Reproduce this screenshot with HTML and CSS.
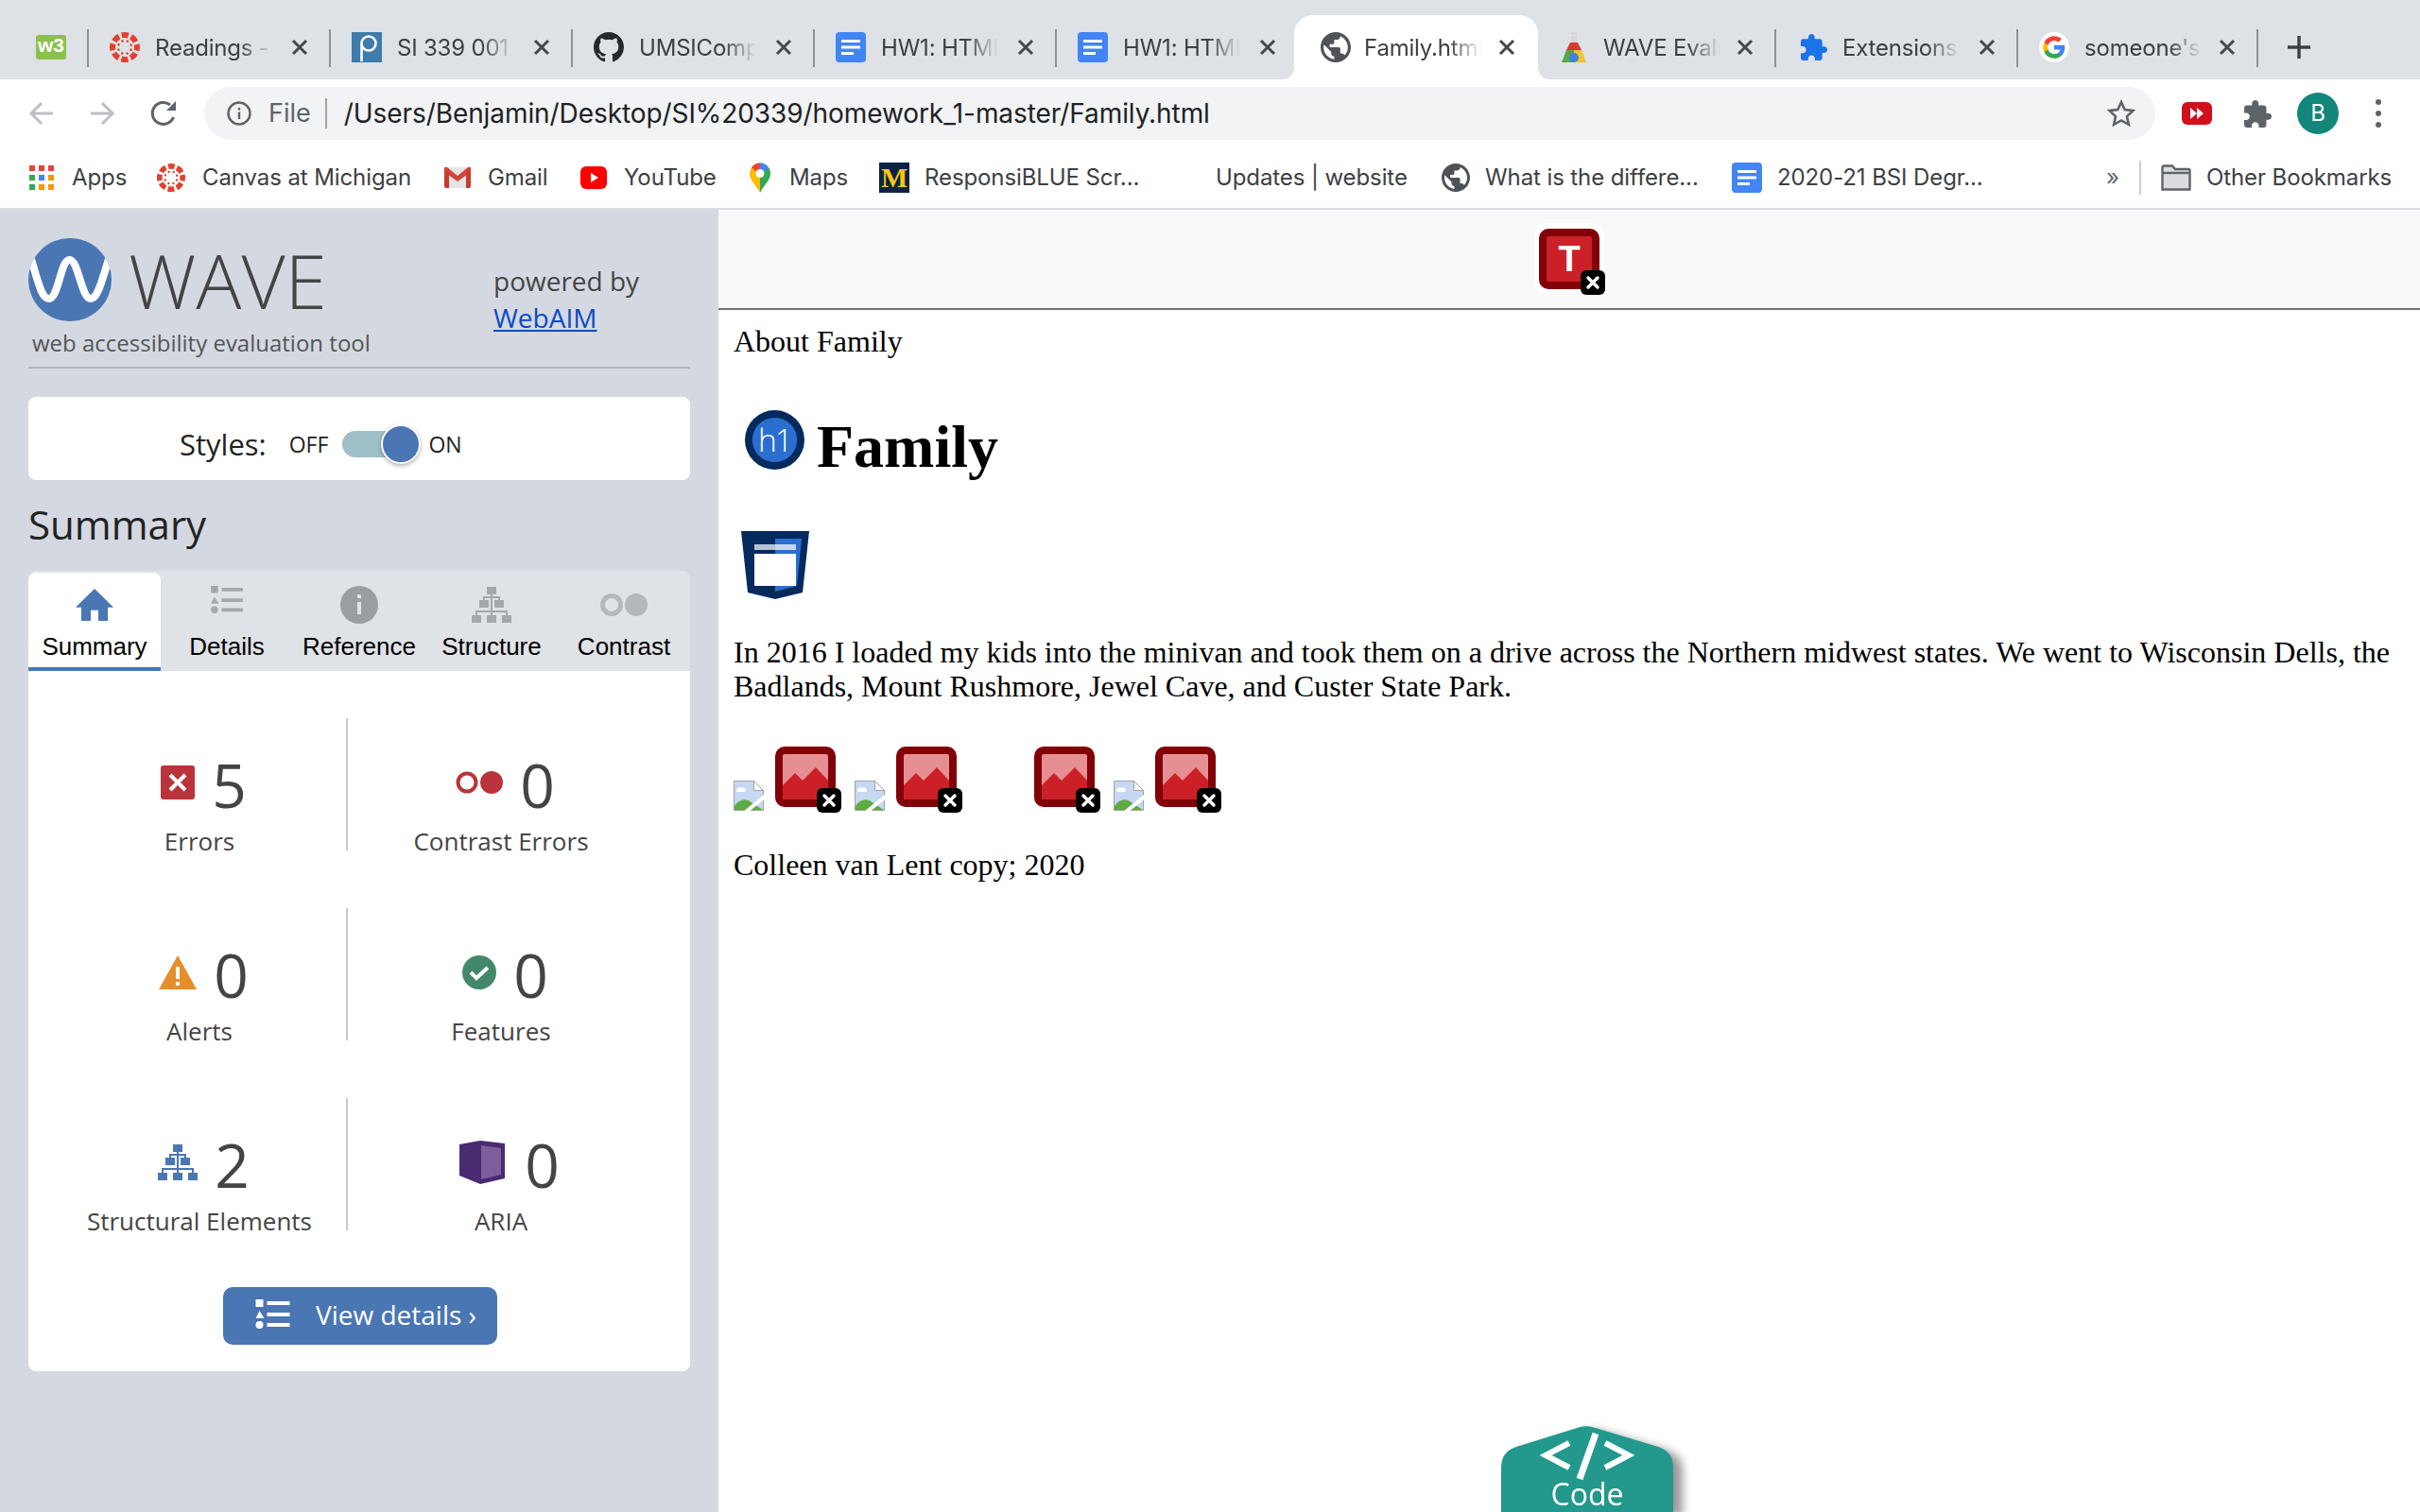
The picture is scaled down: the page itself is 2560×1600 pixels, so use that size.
FILE: index.html
```html
<!DOCTYPE html>
<html lang="en">
<head>
  <meta charset="UTF-8">
  <title>Family.html</title>
  <link rel="stylesheet" href="styles.css">
</head>
<body>
  <svg class="defs" width="0" height="0">
    <symbol id="canvas" viewBox="0 0 32 32">
      <circle cx="16" cy="16" r="13" fill="none" stroke="#e2402f" stroke-width="6" stroke-dasharray="7.200 3" stroke-dashoffset="3.600"/>
      <circle cx="16" cy="16" r="7" fill="none" stroke="#e2402f" stroke-width="2.600" stroke-linecap="round" stroke-dasharray="0 5.498" transform="rotate(22.500 16 16)"/>
    </symbol>
    <symbol id="doc" viewBox="0 0 32 32">
      <rect width="32" height="32" rx="4" fill="#4285f4"/>
      <path d="M6 8h20v3H6zM6 14.500h20v3H6zM6 21h13v3H6z" fill="#fff"/>
    </symbol>
    <symbol id="globe" viewBox="2 2 20 20">
      <path fill="#4f5358" d="M12 2C6.480 2 2 6.480 2 12s4.480 10 10 10 10-4.480 10-10S17.520 2 12 2zm-1 17.930c-3.950-.490-7-3.850-7-7.930 0-.620.080-1.210.210-1.790L9 15v1c0 1.100.9 2 2 2v1.930zm6.900-2.540c-.260-.810-1-1.390-1.900-1.390h-1v-3c0-.550-.450-1-1-1H8v-2h2c.550 0 1-.450 1-1V7h2c1.100 0 2-.9 2-2v-.410c2.930 1.190 5 4.060 5 7.410 0 2.080-.8 3.970-2.100 5.390z"/>
    </symbol>
    <symbol id="puzzle" viewBox="2 1 21 21">
      <path d="M20.500 11H19V7c0-1.100-.9-2-2-2h-4V3.500C13 2.120 11.880 1 10.500 1S8 2.120 8 3.500V5H4c-1.100 0-1.990.9-1.990 2v3.800H3.500c1.490 0 2.700 1.210 2.700 2.700s-1.210 2.700-2.700 2.700H2V20c0 1.100.9 2 2 2h3.800v-1.500c0-1.490 1.210-2.700 2.700-2.700 1.490 0 2.700 1.210 2.700 2.700V22H17c1.100 0 2-.9 2-2v-4h1.500c1.380 0 2.500-1.120 2.500-2.500S21.880 11 20.500 11z"/>
    </symbol>
    <symbol id="close" viewBox="0 0 18 18">
      <path d="M2 2l14 14M16 2L2 16" stroke="#45484d" stroke-width="3" fill="none"/>
    </symbol>
    <symbol id="badge" viewBox="0 0 26 26">
      <rect width="26" height="26" rx="6" fill="#000"/>
      <path d="M8 8l10 10M18 8L8 18" stroke="#fff" stroke-width="3.400" stroke-linecap="round" fill="none"/>
    </symbol>
    <symbol id="broken" viewBox="0 0 32 32">
      <path d="M.5.500h21l10 10v21H.5z" fill="#c6d8f2" stroke="#a2a2a2"/>
      <path d="M21.500.500v10h10z" fill="#fff" stroke="#a2a2a2"/>
      <path d="M3 10a3 3 0 015-2 3 3 0 015 2 2 2 0 01-1 2H4a2 2 0 01-1-2z" fill="#fff"/>
      <path d="M1 31v-4c5-8 13-9 19-3l11 7z" fill="#5dab42"/>
      <path d="M13 33L34 16" stroke="#fff" stroke-width="4"/>
    </symbol>
    <symbol id="picture" viewBox="0 0 64 64">
      <rect width="64" height="64" rx="10" fill="#820007"/>
      <rect x="8" y="8" width="48" height="48" rx="2" fill="#e58f93"/>
      <path d="M8 41l13-13 8 8 14-14 13 14v18a2 2 0 01-2 2H10a2 2 0 01-2-2z" fill="#cb2027"/>
    </symbol>
    <symbol id="tree" viewBox="0 0 42 38">
      <path d="M16 0h10v8H16zM8 14h10v8H8zM24 14h10v8H24zM0 30h10v8H0zM16 30h10v8H16zM32 30h10v8H32z"/>
      <path d="M21 8v3M13 14v-3h16v3M21 11v15M5 30v-4h32v4M21 26v4" fill="none" stroke="currentColor" stroke-width="2"/>
    </symbol>
  </svg>

  <header class="tabstrip">
    <div class="tab pinned">
      <span class="w3-icon">w3</span>
    </div>
    <div class="tab">
      <svg class="fav"><use href="#canvas"/></svg>
      <span class="tab-title">Readings - SI 339</span>
      <svg class="tab-close"><use href="#close"/></svg>
    </div>
    <div class="tab">
      <svg class="fav" viewBox="0 0 32 32"><rect width="32" height="32" fill="#3d7cab"/><circle cx="18" cy="12" r="7.500" fill="none" stroke="#fff" stroke-width="2.600"/><path d="M10.500 12v19" stroke="#fff" stroke-width="2.600"/></svg>
      <span class="tab-title">SI 339 001 W21</span>
      <svg class="tab-close"><use href="#close"/></svg>
    </div>
    <div class="tab">
      <svg class="fav" viewBox="0 0 16 16"><path fill="#24292e" d="M8 0C3.580 0 0 3.580 0 8c0 3.540 2.290 6.530 5.470 7.590.4.070.550-.170.550-.380 0-.190-.010-.820-.010-1.490-2.010.370-2.530-.490-2.690-.940-.090-.230-.480-.940-.820-1.130-.280-.150-.680-.520-.010-.530.630-.010 1.080.580 1.230.820.720 1.210 1.870.870 2.330.660.070-.520.280-.870.510-1.070-1.780-.2-3.640-.890-3.640-3.950 0-.870.310-1.590.820-2.150-.080-.2-.360-1.020.080-2.120 0 0 .670-.210 2.200.820.640-.180 1.320-.270 2-.270.680 0 1.360.090 2 .270 1.530-1.040 2.200-.820 2.200-.820.440 1.100.160 1.920.080 2.120.510.560.820 1.270.820 2.150 0 3.070-1.870 3.750-3.650 3.950.290.250.540.730.540 1.480 0 1.070-.010 1.930-.010 2.200 0 .210.150.460.550.380A8.013 8.013 0 0016 8c0-4.420-3.580-8-8-8z"/></svg>
      <span class="tab-title">UMSIComputing</span>
      <svg class="tab-close"><use href="#close"/></svg>
    </div>
    <div class="tab">
      <svg class="fav"><use href="#doc"/></svg>
      <span class="tab-title">HW1: HTML Basics</span>
      <svg class="tab-close"><use href="#close"/></svg>
    </div>
    <div class="tab before-active">
      <svg class="fav"><use href="#doc"/></svg>
      <span class="tab-title">HW1: HTML Basics</span>
      <svg class="tab-close"><use href="#close"/></svg>
    </div>
    <div class="tab active">
      <svg class="fav"><use href="#globe"/></svg>
      <span class="tab-title">Family.html</span>
      <svg class="tab-close"><use href="#close"/></svg>
    </div>
    <div class="tab">
      <svg class="fav flask" viewBox="0 0 32 32">
        <path d="M13 0h6v3h-6zM13 4h6v7h-6z" fill="#d6d6d6"/>
        <path d="M12 11h8l4 8H8z" fill="#d93a30"/>
        <path d="M8 19h8v13H3z" fill="#55a846"/>
        <path d="M16 19h8l5 13H16z" fill="#f2c230"/>
        <circle cx="16" cy="27" r="5" fill="#3f7fe0"/>
      </svg>
      <span class="tab-title">WAVE Evaluation</span>
      <svg class="tab-close"><use href="#close"/></svg>
    </div>
    <div class="tab">
      <svg class="fav blue-puzzle"><use href="#puzzle"/></svg>
      <span class="tab-title">Extensions</span>
      <svg class="tab-close"><use href="#close"/></svg>
    </div>
    <div class="tab last">
      <svg class="fav" viewBox="0 0 24 24">
        <circle cx="12" cy="12" r="12" fill="#fff"/>
        <g transform="translate(2.400 2.400) scale(.8)">
          <path fill="#4285f4" d="M22.560 12.250c0-.780-.070-1.530-.2-2.250H12v4.260h5.920c-.260 1.370-1.040 2.530-2.210 3.310v2.770h3.570c2.080-1.920 3.280-4.740 3.280-8.090z"/>
          <path fill="#34a853" d="M12 23c2.970 0 5.460-.980 7.280-2.660l-3.570-2.770c-.980.660-2.230 1.060-3.710 1.060-2.860 0-5.290-1.930-6.160-4.530H2.180v2.840C3.990 20.530 7.700 23 12 23z"/>
          <path fill="#fbbc05" d="M5.840 14.090c-.220-.660-.350-1.360-.350-2.090s.130-1.430.350-2.090V7.070H2.180C1.430 8.550 1 10.220 1 12s.430 3.450 1.180 4.930l3.660-2.840z"/>
          <path fill="#ea4335" d="M12 5.380c1.620 0 3.060.560 4.210 1.640l3.150-3.150C17.450 2.090 14.970 1 12 1 7.700 1 3.990 3.470 2.180 7.070l3.660 2.840c.870-2.600 3.300-4.530 6.160-4.530z"/>
        </g>
      </svg>
      <span class="tab-title">someone's guide</span>
      <svg class="tab-close"><use href="#close"/></svg>
    </div>
    <svg class="new-tab" viewBox="0 0 24 24"><path d="M12 0v24M0 12h24" stroke="#3c4043" stroke-width="3.400" fill="none"/></svg>
  </header>

  <div class="toolbar">
    <svg class="nav-icon" viewBox="0 0 28 28"><path d="M26 14H4M14 3L3 14l11 11" fill="none" stroke="#bcbfc3" stroke-width="3"/></svg>
    <svg class="nav-icon" viewBox="0 0 28 28"><path d="M2 14h22M14 3l11 11-11 11" fill="none" stroke="#bcbfc3" stroke-width="3"/></svg>
    <svg class="nav-icon" viewBox="0 0 30 30"><path d="M25.500 19A11.500 11.500 0 1122 6" fill="none" stroke="#5f6368" stroke-width="3"/><path d="M18 12h10V2z" fill="#5f6368"/></svg>
    <div class="omnibox">
      <svg class="info-icon" viewBox="0 0 26 26"><circle cx="13" cy="13" r="11.500" fill="none" stroke="#5f6368" stroke-width="2.400"/><path d="M11.800 11.500h2.400V19h-2.400zM11.800 7h2.400v2.400h-2.400z" fill="#5f6368"/></svg>
      <span class="scheme">File</span>
      <span class="url">/Users/Benjamin/Desktop/SI%20339/homework_1-master/Family.html</span>
      <svg class="star" viewBox="0 0 30 30"><path d="M15 3l3.700 8.100 8.800 1-6.500 6 1.800 8.700L15 22.400l-7.800 4.400L9 18.100l-6.500-6 8.800-1z" fill="none" stroke="#5f6368" stroke-width="2.600"/></svg>
    </div>
    <svg class="ext-play" viewBox="0 0 32 24"><rect width="32" height="24" rx="6" fill="#d0101c"/><path d="M9 6l7 6-7 6zM16 6l7 6-7 6z" fill="#fff"/></svg>
    <svg class="ext-puzzle"><use href="#puzzle"/></svg>
    <span class="avatar">B</span>
    <svg class="menu-dots" viewBox="0 0 6 30"><circle cx="3" cy="3" r="3"/><circle cx="3" cy="15" r="3"/><circle cx="3" cy="27" r="3"/></svg>
  </div>

  <nav class="bookmarks">
    <a class="bm gap-20"><svg class="bm-icon apps" viewBox="0 0 26 26"><path fill="#ea4335" d="M0 0h6v6H0zM10 0h6v6h-6zM20 0h6v6h-6z"/><path fill="#34a853" d="M0 10h6v6H0zM0 20h6v6H0z"/><path fill="#4285f4" d="M10 10h6v6h-6z"/><path fill="#f29900" d="M20 10h6v6h-6zM10 20h6v6h-6zM20 20h6v6h-6z"/></svg>Apps</a>
    <a class="bm"><svg class="bm-icon"><use href="#canvas"/></svg>Canvas at Michigan</a>
    <a class="bm"><svg class="bm-icon gmail" viewBox="0 0 28 22"><path d="M0 0h28v20a2 2 0 01-2 2H2a2 2 0 01-2-2z" fill="#e4e4e4"/><path d="M0 0h3l11 9L25 0h3v5L14 15 0 5z" fill="#d0453a"/><path d="M0 2l5 4v16H2a2 2 0 01-2-2zM28 2l-5 4v16h3a2 2 0 002-2z" fill="#c8392e"/></svg>Gmail</a>
    <a class="bm"><svg class="bm-icon yt" viewBox="0 0 28 24"><rect width="28" height="24" rx="6" fill="#f00"/><path d="M11 7l8 5-8 5z" fill="#fff"/></svg>YouTube</a>
    <a class="bm gap-20"><svg class="bm-icon maps" viewBox="0 0 24 32"><path d="M12 32C9 25 1 19 1 11.500A11 11 0 0112 .500z" fill="#fbbc04"/><path d="M12 32c3-7 11-13 11-20.500A11 11 0 0012 .500z" fill="#34a853"/><path d="M12 .500A11 11 0 003 5.500l9 7z" fill="#ea4335"/><path d="M12 .500a11 11 0 019 5l-9 7z" fill="#4285f4"/><circle cx="12" cy="11.500" r="4.500" fill="#fff"/></svg>Maps</a>
    <a class="bm gap-16"><span class="michigan">M</span>ResponsiBLUE Scr...</a>
    <a class="bm">Updates | website</a>
    <a class="bm gap-16"><svg class="bm-icon"><use href="#globe"/></svg>What is the differe...</a>
    <a class="bm gap-16"><svg class="bm-icon doc-icon"><use href="#doc"/></svg>2020-21 BSI Degr...</a>
    <span class="bm-more">»</span>
    <a class="bm gap-16"><svg class="bm-icon doc-icon" viewBox="0 0 32 28"><path d="M1.500 26.500V3a1.500 1.500 0 011.500-1.500h9L15 5h14a1.500 1.500 0 011.500 1.500v20z" fill="#dadce0" stroke="#5f6368" stroke-width="2.400"/><path d="M1.500 9h29" stroke="#5f6368" stroke-width="2.400"/></svg>Other Bookmarks</a>
  </nav>

  <main class="main">
    <aside class="wave">
      <div class="wave-head">
        <div class="brand">
          <div class="brand-row">
            <svg class="wave-logo" viewBox="0 0 88 88">
              <clipPath id="logo-clip"><circle cx="44" cy="44" r="44"/></clipPath>
              <circle cx="44" cy="44" r="44" fill="#4a76b4"/>
              <path clip-path="url(#logo-clip)" d="M0 14C8 34 12 64 21.700 64 32 64 34 23 43.500 23 53 23 56 64 66 64 75 64 80 34 88 14" fill="none" stroke="#fff" stroke-width="8"/>
            </svg>
            <span class="wave-name">WAVE</span>
          </div>
          <p class="wave-sub">web accessibility evaluation tool</p>
        </div>
        <p class="powered">powered by<br><a class="webaim">WebAIM</a></p>
      </div>

      <div class="styles-card">
        <span class="styles-label">Styles:</span>
        <span class="switch-text off">OFF</span>
        <span class="switch"><span class="knob"></span></span>
        <span class="switch-text on">ON</span>
      </div>

      <h2 class="panel-title">Summary</h2>

      <div class="panel-tabs">
        <div class="panel-tab current">
          <span class="panel-icon"><svg width="40" height="34" viewBox="0 0 40 36" preserveAspectRatio="none"><path d="M20 0L0 21h6v15h10V24h8v12h10V21h6z" fill="#4a76b4"/></svg></span>
          Summary
        </div>
        <div class="panel-tab">
          <span class="panel-icon list"><svg width="36" height="30" viewBox="0 0 36 32"><g fill="#a4a8ad"><rect width="8" height="8"/><path d="M4 12l5 8H0z"/><circle cx="4" cy="27" r="4"/><path d="M12 2h24v4H12zM12 14h24v4H12zM12 25h24v4H12z"/></g></svg></span>
          Details
        </div>
        <div class="panel-tab">
          <span class="panel-icon"><svg width="40" height="40" viewBox="0 0 40 40"><circle cx="20" cy="20" r="20" fill="#9a9ea3"/><path d="M18 17h4v13h-4zM18 9h4v4h-4z" fill="#dfe2e7"/></svg></span>
          Reference
        </div>
        <div class="panel-tab">
          <span class="panel-icon"><svg width="42" height="38" viewBox="0 0 42 38"><use href="#tree"/></svg></span>
          Structure
        </div>
        <div class="panel-tab">
          <span class="panel-icon"><svg width="50" height="24" viewBox="0 0 50 24"><circle cx="12" cy="12" r="9.500" fill="none" stroke="#b4b8bd" stroke-width="5"/><circle cx="38" cy="12" r="12" fill="#b4b8bd"/></svg></span>
          Contrast
        </div>
      </div>

      <div class="panel-body">
        <div class="stats">
          <div class="stat">
            <div class="stat-top">
              <svg class="stat-icon" width="36" height="36" viewBox="0 0 36 36"><rect width="36" height="36" rx="3" fill="#b9343a"/><path d="M10 10l16 16M26 10L10 26" stroke="#fff" stroke-width="4"/></svg>
              <span class="stat-num">5</span>
            </div>
            <span class="stat-label">Errors</span>
          </div>
          <div class="stat">
            <div class="stat-top">
              <svg class="stat-icon" width="50" height="24" viewBox="0 0 50 24"><circle cx="12" cy="12" r="9.500" fill="none" stroke="#b9343a" stroke-width="4"/><circle cx="38" cy="12" r="12" fill="#b9343a"/></svg>
              <span class="stat-num">0</span>
            </div>
            <span class="stat-label">Contrast Errors</span>
          </div>
          <div class="stat">
            <div class="stat-top">
              <svg class="stat-icon" width="40" height="36" viewBox="0 0 40 36"><path d="M20 0l20 36H0z" fill="#e58e2a"/><path d="M18 12h4v13h-4zM18 28h4v4h-4z" fill="#fff"/></svg>
              <span class="stat-num">0</span>
            </div>
            <span class="stat-label">Alerts</span>
          </div>
          <div class="stat">
            <div class="stat-top">
              <svg class="stat-icon" width="36" height="36" viewBox="0 0 36 36"><circle cx="18" cy="18" r="18" fill="#44886b"/><path d="M9 18l6 6 12-11" fill="none" stroke="#fff" stroke-width="4"/></svg>
              <span class="stat-num">0</span>
            </div>
            <span class="stat-label">Features</span>
          </div>
          <div class="stat">
            <div class="stat-top">
              <svg class="stat-icon tree-blue" width="42" height="38" viewBox="0 0 42 38"><use href="#tree"/></svg>
              <span class="stat-num">2</span>
            </div>
            <span class="stat-label">Structural Elements</span>
          </div>
          <div class="stat">
            <div class="stat-top">
              <svg class="stat-icon aria-icon" width="48" height="46" viewBox="0 0 48 46"><path d="M0 4l22-4 26 3v37l-26 6L0 37z" fill="#4a2a70"/><path d="M23 5l21 3v28l-21 5z" fill="#7e5d9c"/></svg>
              <span class="stat-num">0</span>
            </div>
            <span class="stat-label">ARIA</span>
          </div>
        </div>
        <a class="view-details">
          <svg class="details-icon" viewBox="0 0 36 32"><g fill="#fff"><rect width="8" height="8"/><path d="M4 12l5 8H0z"/><circle cx="4" cy="27" r="4"/><path d="M12 2h24v4H12zM12 14h24v4H12zM12 25h24v4H12z"/></g></svg>
          View details ›
        </a>
      </div>
    </aside>

    <section class="page">
      <div class="alert-bar">
        <span class="t-icon">
          <svg class="t-shape" viewBox="0 0 64 64"><rect width="64" height="64" rx="10" fill="#820007"/><rect x="8" y="8" width="48" height="48" rx="2" fill="#cb2027"/></svg>
          <span class="t-letter">T</span>
          <svg class="wave-badge"><use href="#badge"/></svg>
        </span>
      </div>
      <div class="page-body">
        <p class="about">About Family</p>
        <h1 class="page-title">
          <svg class="h1-icon" viewBox="0 0 64 64"><circle cx="32" cy="32" r="32" fill="#052a5e"/><circle cx="32" cy="32" r="24" fill="#2a6fd0"/><text x="32" y="45" text-anchor="middle" class="h1-text">h1</text></svg>
          <span class="title-text">Family</span>
        </h1>
        <svg class="shield" viewBox="0 0 72 72">
          <path d="M0 0h72l-7 65-29 7-29-7z" fill="#052a5e"/>
          <path d="M36 8h28l-5 50-23 6z" fill="#2a6fd0"/>
          <rect x="14" y="14" width="22" height="6" fill="#b5c3d4"/>
          <rect x="36" y="14" width="22" height="6" fill="#c4d7ef"/>
          <rect x="14" y="24" width="44" height="34" fill="#fff"/>
        </svg>
        <p class="story">In 2016 I loaded my kids into the minivan and took them on a drive across the Northern midwest states. We went to Wisconsin Dells, the Badlands, Mount Rushmore, Jewel Cave, and Custer State Park.</p>
        <div class="gallery">
          <div class="shot"><svg class="broken"><use href="#broken"/></svg><span class="pic"><svg class="pic-svg"><use href="#picture"/></svg><svg class="wave-badge"><use href="#badge"/></svg></span></div>
          <div class="shot"><svg class="broken"><use href="#broken"/></svg><span class="pic"><svg class="pic-svg"><use href="#picture"/></svg><svg class="wave-badge"><use href="#badge"/></svg></span></div>
          <div class="shot missing"><span class="pic"><svg class="pic-svg"><use href="#picture"/></svg><svg class="wave-badge"><use href="#badge"/></svg></span></div>
          <div class="shot"><svg class="broken"><use href="#broken"/></svg><span class="pic"><svg class="pic-svg"><use href="#picture"/></svg><svg class="wave-badge"><use href="#badge"/></svg></span></div>
        </div>
        <p class="credit">Colleen van Lent copy; 2020</p>
      </div>
      <div class="code-btn">
        <svg class="code-shape" viewBox="0 0 182 91"><path d="M82 1.500Q90-1 98 1.500L166 22Q182 27 182 44V91H0V44Q0 27 16 22z" fill="#23988c"/></svg>
        <svg class="code-icon" viewBox="0 0 100 52"><path d="M31 12L6 25l25 13M69 12l25 13-25 13" fill="none" stroke="#fff" stroke-width="6"/><path d="M59 2L42 50" fill="none" stroke="#fff" stroke-width="7"/></svg>
        <span class="code-label">Code</span>
      </div>
    </section>
  </main>
</body>
</html>
```

FILE: styles.css
```css
* { box-sizing: border-box; }
html, body { margin: 0; }
body { width: 2560px; height: 1600px; overflow: hidden; background: white; font-family: Inter, "Noto Sans", sans-serif; color: #3c4043; display: flex; flex-direction: column; }
p, h1, h2 { margin: 0; font-weight: normal; }
svg { display: block; flex: none; }
.defs { position: absolute; }

/* tab strip */
.tabstrip { height: 84px; background: #dee1e6; display: flex; align-items: flex-start; padding-top: 16px; flex: none; }
.tab { width: 256px; height: 68px; display: flex; align-items: center; padding: 0 24px 0 22px; position: relative; flex: none; }
.tab::after { content: ""; position: absolute; right: 0; top: 15px; height: 40px; width: 2px; background: #8e9297; }
.tab.pinned { width: 94px; padding-left: 38px; }
.tab.last { width: 254px; }
.tab.before-active::after { display: none; }
.tab.active { background: white; border-radius: 20px 20px 0 0; width: 258px; margin: 0 -4px 0 -5px; padding: 0 24px 0 28px; z-index: 1; }
.tab.active::before, .tab.active::after { content: ""; position: absolute; bottom: 0; top: auto; width: 12px; height: 12px; }
.tab.active::before { left: -12px; background: radial-gradient(circle at 0 0, #dee1e6 11.500px, white 12px); }
.tab.active::after { right: -12px; background: radial-gradient(circle at 100% 0, #dee1e6 11.500px, white 12px); }
.tab.active .tab-title { margin-left: 14px; }
.fav { width: 32px; height: 32px; }
.flask { margin: 0 -1px 0 4px; }
.blue-puzzle { fill: #1a73e8; width: 28px; margin-left: 4px; }
.w3-icon { width: 32px; height: 26px; background: #8ac249; border-radius: 3px; color: white; font: bold 21px/22px "Liberation Sans", sans-serif; text-align: center; }
.tab-title { margin-left: 16px; width: 124px; font-size: 24px; letter-spacing: -.2px; white-space: nowrap; overflow: hidden; -webkit-mask-image: linear-gradient(to right, black 72%, transparent 100%); mask-image: linear-gradient(to right, black 72%, transparent 100%); }
.tab-close { width: 18px; height: 18px; margin-left: auto; }
.new-tab { width: 24px; height: 24px; margin: 22px 0 0 31px; }

/* toolbar */
.toolbar { height: 64px; flex: none; display: flex; align-items: center; padding-left: 30px; padding-top: 8px; }
.nav-icon { width: 28px; height: 28px; margin-right: 36px; }
.nav-icon:nth-child(3) { width: 30px; height: 30px; margin-right: 28px; }
.omnibox { width: 2064px; height: 56px; background: #f1f3f4; border-radius: 28px; display: flex; align-items: center; padding-left: 24px; }
.info-icon { width: 26px; height: 26px; }
.scheme { margin-left: 18px; font-size: 27px; color: #5f6368; padding-right: 15px; border-right: 2px solid #a0a3a7; line-height: 32px; }
.url { margin-left: 18px; font-size: 28px; letter-spacing: -.08px; color: #202124; white-space: nowrap; }
.star { width: 30px; height: 30px; margin-left: auto; margin-right: 21px; }
.ext-play { width: 32px; height: 24px; margin-left: 28px; }
.ext-puzzle { width: 29px; height: 29px; margin-left: 34px; fill: #5f6368; }
.avatar { width: 44px; height: 44px; margin-left: 27px; border-radius: 50%; background: #12877a; color: white; font-size: 24px; text-align: center; line-height: 44px; }
.menu-dots { width: 6px; height: 30px; margin-left: 39px; fill: #5f6368; }

/* bookmarks */
.bookmarks { height: 74px; flex: none; display: grid; grid-template-columns: 135px 304px 144px 178px 138px 356px 239px 307px 396px 58px auto; align-items: center; padding: 7px 0 0 31px; border-bottom: 2px solid #dcdce2; font-size: 24px; letter-spacing: -.1px; }
.bm { display: flex; align-items: center; gap: 18px; white-space: nowrap; }
.gap-20 { gap: 19px; }
.gap-16 { gap: 16px; }
.bm-icon { width: 30px; height: 30px; }
.doc-icon { width: 32px; height: 32px; }
.apps { width: 26px; height: 26px; }
.gmail { width: 28px; height: 22px; }
.yt { width: 28px; height: 24px; }
.maps { width: 24px; height: 32px; }
.michigan { width: 32px; height: 32px; background: #0b2244; color: #f5c518; font: bold 30px/32px "Liberation Serif", serif; text-align: center; }
.bm-more { width: 37px; color: #5f6368; border-right: 2px solid #ccc; line-height: 36px; }

/* wave sidebar */
.main { flex: 1; display: flex; min-height: 0; }
.wave { width: 760px; flex: none; background: #d4d9e1; padding: 30px 30px 0; font-family: "Open Sans", sans-serif; }
.wave-head { display: flex; justify-content: space-between; height: 138px; border-bottom: 2px solid #b0b5ba; }
.brand-row { display: flex; align-items: center; gap: 18px; height: 88px; }
.wave-logo { width: 88px; height: 88px; }
.wave-name { font-size: 80px; font-weight: 300; color: #444; line-height: 88px; }
.wave-sub { font-size: 24px; color: #555; margin: 6px 0 0 4px; white-space: nowrap; }
.powered { font-size: 28px; color: #444; line-height: 39px; width: 208px; padding-top: 26px; }
.webaim { color: #0a4cc4; text-decoration: underline; }
.styles-card { height: 88px; margin-top: 30px; background: white; border-radius: 8px; display: flex; align-items: center; padding: 11px 0 0 160px; }
.styles-label { font-size: 31px; color: #222; }
.switch-text { font-size: 23px; color: #222; }
.switch-text.off { margin-left: 24px; }
.switch-text.on { margin-left: 43px; }
.switch { width: 48px; height: 28px; margin-left: 15px; background: #9fbfc9; border-radius: 14px 0 0 14px; position: relative; }
.knob { position: absolute; left: 41px; top: -7px; width: 42px; height: 42px; background: #4a76b4; border: 2px solid white; border-radius: 50%; box-shadow: 0 2px 4px rgba(0,0,0,.3); }
.panel-title { font-size: 42px; color: #222; margin-top: 22px; line-height: 50px; }
.panel-tabs { margin-top: 24px; height: 106px; background: #dfe2e7; border-radius: 8px 8px 0 0; display: flex; font: 26px/30px "Liberation Sans", sans-serif; color: #000; }
.panel-tab { width: 140px; display: flex; flex-direction: column; align-items: center; padding-top: 16px; height: 106px; white-space: nowrap; }
.panel-tab.current { background: white; border-bottom: 4px solid #4a76b4; border-radius: 8px 8px 0 0; margin-top: 2px; height: 104px; padding-top: 14px; }
.panel-icon { height: 40px; display: flex; align-items: center; margin-bottom: 9px; color: #a4a8ad; fill: #a4a8ad; }
.panel-icon.list { align-items: flex-start; }
.panel-body { height: 741px; background: white; border-radius: 0 0 8px 8px; padding-top: 50px; }
.stats { display: grid; grid-template-columns: 338px 324px; grid-auto-rows: 140px; row-gap: 61px; }
.stat { display: flex; flex-direction: column; align-items: center; padding-top: 35px; color: #444; }
.stat:nth-child(odd) { border-right: 2px solid #c8c9cc; padding-left: 26px; }
.stat-top { display: flex; align-items: center; gap: 18px; height: 72px; padding-left: 9px; }
.stat-icon { margin-top: -6px; color: #4a76b4; fill: #4a76b4; }
.aria-icon { margin-left: 9px; margin-right: 3px; }
.stat-num { font-size: 64px; line-height: 72px; }
.stat-label { font-size: 26px; line-height: 36px; margin-top: 5px; white-space: nowrap; }
.view-details { width: 290px; height: 61px; margin: 60px 0 0 206px; background: #4a76b4; border-radius: 10px; color: white; font-size: 28px; display: flex; align-items: center; padding: 0 0 3px 34px; gap: 27px; }
.details-icon { width: 37px; height: 32px; }

/* page */
.page { flex: 1; position: relative; background: white; font-family: "Liberation Serif", serif; font-size: 32px; color: #000; }
.alert-bar { height: 106px; background: #f9f9f9; border-bottom: 2px solid #70756b; display: flex; padding: 14px 0 0 863px; }
.t-icon { position: relative; width: 74px; height: 76px; padding: 6px 0 0 5px; background: white; border-radius: 14px; }
.t-shape { width: 64px; height: 64px; }
.t-letter { position: absolute; left: 5px; top: 6px; width: 64px; font: bold 38px/64px "Liberation Sans", sans-serif; color: white; text-align: center; }
.wave-badge { position: absolute; right: -6px; bottom: -6px; width: 26px; height: 26px; }
.t-icon .wave-badge { right: -1px; bottom: 0; }
.page-body { padding: 15px 16px 0; }
.about { line-height: 37px; }
.page-title { display: flex; align-items: flex-start; gap: 13px; margin: 54px 0 0 12px; font-size: 64px; font-weight: bold; line-height: 74px; height: 76px; }
.title-text { margin-top: 2px; }
.h1-icon { width: 63px; height: 63px; }
.h1-text { font: 300 34px "Open Sans", sans-serif; letter-spacing: -2px; fill: white; }
.shield { width: 72px; height: 72px; margin: 52px 0 0 8px; }
.story { margin-top: 38px; line-height: 36px; }
.gallery { display: flex; gap: 20px; margin-top: 46px; height: 70px; }
.shot { display: flex; gap: 12px; align-items: flex-start; }
.shot.missing { margin-left: 62px; }
.broken { width: 32px; height: 32px; margin-top: 36px; }
.pic { position: relative; width: 64px; height: 64px; }
.pic-svg { width: 64px; height: 64px; }
.credit { margin-top: 37px; line-height: 37px; }
.code-btn { position: absolute; left: 828px; bottom: 0; width: 182px; height: 91px; filter: drop-shadow(10px 4px 5px rgba(0,0,0,.4)); display: flex; flex-direction: column; align-items: center; font-family: "Open Sans", sans-serif; color: white; }
.code-shape { position: absolute; inset: 0; width: 182px; height: 91px; }
.code-icon { position: relative; width: 100px; height: 52px; margin-top: 6px; }
.code-label { position: relative; font-size: 32px; line-height: 36px; margin-top: -4px; }
```
